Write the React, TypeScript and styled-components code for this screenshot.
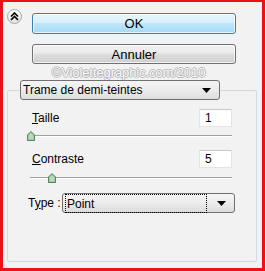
import {FC} from "react";
import styled, {createGlobalStyle} from "styled-components";

const GlobalStyle = createGlobalStyle`
    html, body {
        margin: 0;
        padding: 0;
        background: #f2f2f2;
    }
    body {
        font-family: "Liberation Sans", Arial, sans-serif;
        font-size: 12px;
        color: #000;
    }
`;

const Slider: FC<{position: number; top: number}> = ({position, top}) => (
    <SliderTrack $top={top}>
        <Thumb style={{left: position}}>
            <svg width="8" height="10" viewBox="0 0 8 10">
                <path d="M0.5 9.5 V4 L4 0.5 L7.5 4 V9.5 Z" fill="#8fc29a" stroke="#5b7f63" />
                <path d="M1.5 8.5 V4.4 L4 1.9 L6.5 4.4 V8.5 Z" fill="#b7dcbc" />
            </svg>
        </Thumb>
    </SliderTrack>
);

const Arrow: FC = () => (
    <svg width="9" height="5" viewBox="0 0 9 5">
        <path d="M0 0 H9 L4.5 5 Z" fill="#000" />
    </svg>
);

const App: FC = () => {
    return (
        <>
            <GlobalStyle />
            <Frame>
                <Header>
                    <Collapse>
                        <svg width="9" height="9" viewBox="0 0 9 9">
                            <path d="M1 4.5 L4.5 1 L8 4.5 M1 8 L4.5 4.5 L8 8" fill="none" stroke="#000" strokeWidth="1.6" />
                        </svg>
                    </Collapse>
                    <Buttons>
                        <PushButton $primary>OK</PushButton>
                        <PushButton>Annuler</PushButton>
                    </Buttons>
                </Header>
                <Watermark>©Violettegraphic.com/2010</Watermark>
                <Group>
                    <Legend>
                        <Select $width={200}>
                            <span>Trame de demi-teintes</span>
                            <Arrow />
                        </Select>
                    </Legend>
                    <FieldRow>
                        <Label><u>T</u>aille</Label>
                        <NumberBox>1</NumberBox>
                    </FieldRow>
                    <Slider position={-3} top={8} />
                    <FieldRow>
                        <Label><u>C</u>ontraste</Label>
                        <NumberBox>5</NumberBox>
                    </FieldRow>
                    <Slider position={18} top={9} />
                    <TypeRow>
                        <TypeLabel>T<u>y</u>pe :</TypeLabel>
                        <Select $width={173}>
                            <Focus>Point</Focus>
                            <Arrow />
                        </Select>
                    </TypeRow>
                </Group>
            </Frame>
        </>
    );
};

export default App;

const Frame = styled.div`
    box-sizing: border-box;
    width: 265px;
    height: 271px;
    border: 3px solid #ee1111;
    border-top-width: 2px;
    background: #f2f2f2;
    display: flex;
    flex-direction: column;
`;

const Header = styled.div`
    display: flex;
    padding-top: 6px;
`;

const Collapse = styled.div`
    box-sizing: border-box;
    width: 15px;
    height: 15px;
    margin: 1px 0 0 4px;
    border-radius: 50%;
    border: 1px solid #a9a9a9;
    background: linear-gradient(#ffffff, #e2e2e2);
    display: flex;
    align-items: center;
    justify-content: center;
`;

const Buttons = styled.div`
    display: flex;
    flex-direction: column;
    gap: 10px;
    margin-left: 10px;
    padding-top: 5px;
    width: 204px;
`;

const PushButton = styled.div<{$primary?: boolean}>`
    box-sizing: border-box;
    height: ${(p) => (p.$primary ? 21 : 20)}px;
    border-radius: 3px;
    border: 1px solid ${(p) => (p.$primary ? "#3c7fb1" : "#707070")};
    background: ${(p) =>
        p.$primary
            ? "linear-gradient(#eaf6fd 0%, #d9f0fc 45%, #bee6fd 50%, #a7d9f5 100%)"
            : "linear-gradient(#f2f2f2 0%, #ebebeb 45%, #dddddd 50%, #cfcfcf 100%)"};
    box-shadow: inset 0 0 0 1px rgba(255, 255, 255, 0.7);
    display: flex;
    align-items: center;
    justify-content: center;
    font-size: 13px;
`;

const Watermark = styled.div`
    text-align: center;
    margin: 2px 8px 0 0;
    height: 14px;
    line-height: 14px;
    font-size: 13px;
    letter-spacing: -0.1px;
    color: #f8f8f8;
    text-shadow: -1px 0 #b8b8b8, 1px 0 #b8b8b8, 0 -1px #b8b8b8, 0 1px #b8b8b8;
`;

const Group = styled.fieldset`
    box-sizing: border-box;
    flex: 1;
    margin: 0 5px 6px 4px;
    padding: 0 24px 0 20px;
    border: 1px solid #d8d8d8;
    border-radius: 2px;
    min-width: 0;
`;

const Legend = styled.legend`
    padding: 0;
    margin-left: -8px;
`;

const Select = styled.div<{$width: number}>`
    box-sizing: border-box;
    flex-shrink: 0;
    width: ${(p) => p.$width}px;
    height: 20px;
    border: 1px solid #707070;
    border-radius: 3px;
    background: linear-gradient(#f5f5f5 0%, #ececec 50%, #dcdcdc 100%);
    display: flex;
    align-items: center;
    justify-content: space-between;
    padding: 0 8px 0 2px;
`;

const Focus = styled.span`
    flex: 1;
    margin-right: 10px;
    padding: 2px 1px 1px;
    border: 1px dotted #000;
`;

const FieldRow = styled.div`
    display: flex;
    justify-content: space-between;
    align-items: center;
    margin-top: 9px;
    padding-left: 4px;
`;

const Label = styled.span`
    font-size: 12px;
`;

const NumberBox = styled.div`
    box-sizing: border-box;
    width: 33px;
    height: 18px;
    background: #fff;
    border: 1px solid #e4e4e4;
    border-top-color: #c8c8c8;
    padding: 1px 5px;
`;

const SliderTrack = styled.div<{$top: number}>`
    position: relative;
    margin: ${(p) => p.$top}px 0 13px 2px;
    border-top: 1px solid #a0a0a0;
    border-bottom: 1px solid #ffffff;
`;

const Thumb = styled.div`
    position: absolute;
    top: -5px;
    line-height: 0;
`;

const TypeRow = styled.div`
    display: flex;
    align-items: center;
    justify-content: space-between;
    margin: 14px -3px 0 0;
`;

const TypeLabel = styled.span`
    white-space: nowrap;
`;
